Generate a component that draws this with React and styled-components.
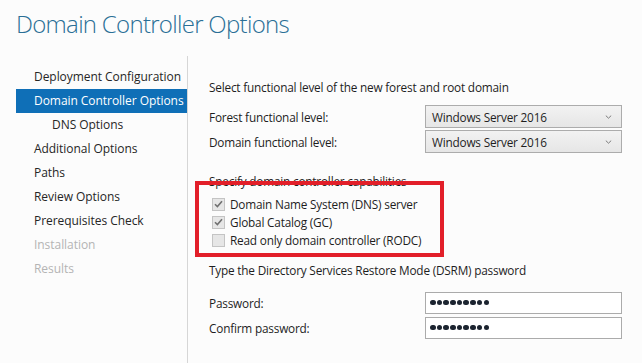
import React from "react";
import styled, { createGlobalStyle } from "styled-components";

const Global = createGlobalStyle`
  html, body {
    margin: 0;
    padding: 0;
    background: #fcfcfc;
  }
  body {
    font-family: "Open Sans", "Noto Sans", sans-serif;
    color: #1e1e1e;
  }
`;

const Page = styled.div`
  position: relative;
  width: 642px;
  height: 363px;
  overflow: hidden;
  background: #fcfcfc;
`;

const Title = styled.h1`
  margin: 0;
  padding: 7px 0 0 16px;
  height: 56px;
  box-sizing: border-box;
  font-size: 24px;
  font-weight: 300;
  color: #2a6f96;
  letter-spacing: -0.7px;
`;

const Body = styled.div`
  display: grid;
  grid-template-columns: 188px 1fr;
  height: 307px;
`;

const Nav = styled.ul`
  list-style: none;
  margin: 0;
  padding: 9px 0 0 16px;
  border-right: 1px solid #d6d6d6;
`;

const NavItem = styled.li`
  height: 24px;
  line-height: 24px;
  width: 171px;
  box-sizing: border-box;
  padding-left: ${(p) => (p.$sub ? 36 : 18)}px;
  font-size: 12px;
  letter-spacing: -0.05px;
  white-space: nowrap;
  background: ${(p) => (p.$active ? "#0f6fb7" : "transparent")};
  color: ${(p) => (p.$active ? "#ffffff" : p.$disabled ? "#b4b4b4" : "#262626")};
`;

const Content = styled.div`
  padding: 21px 0 0 21px;
  font-size: 11.8px;
  letter-spacing: -0.2px;
`;

const Heading = styled.div`
  height: 20px;
  line-height: 20px;
  margin-top: ${(p) => p.$top || 0}px;
  margin-bottom: ${(p) => p.$gap || 0}px;
  white-space: nowrap;
`;

const Row = styled.div`
  display: grid;
  grid-template-columns: 216px 197px;
  align-items: center;
  height: 25px;
`;

const Select = styled.div`
  display: flex;
  align-items: center;
  justify-content: space-between;
  height: 23px;
  box-sizing: border-box;
  padding: 0 9px 0 6px;
  border: 1px solid #acacac;
  background: linear-gradient(#f2f2f2, #e6e6e6);
  color: #1e1e1e;
`;

const Chevron = styled.svg`
  width: 7px;
  height: 4px;
`;

const Input = styled.div`
  display: flex;
  align-items: center;
  height: 22px;
  box-sizing: border-box;
  padding-left: 4px;
  border: 1px solid #ababab;
  background: #ffffff;
  gap: 1.2px;
`;

const Dot = styled.span`
  width: 5.5px;
  height: 5.5px;
  border-radius: 50%;
  background: #1c2430;
`;

const Checks = styled.div`
  display: flex;
  flex-direction: column;
  padding: 4px 0 11px 3px;
`;

const CheckRow = styled.div`
  display: flex;
  align-items: center;
  gap: 5px;
  height: 18px;
`;

const Box = styled.span`
  display: flex;
  align-items: center;
  justify-content: center;
  width: 13px;
  height: 13px;
  box-sizing: border-box;
  border: 1px solid #c4c4c4;
  background: #e6e6e6;
`;

const Highlight = styled.div`
  position: absolute;
  left: 195px;
  top: 181px;
  width: 249px;
  height: 76px;
  box-sizing: border-box;
  border: 4px solid #e21f29;
`;

const steps = [
  { label: "Deployment Configuration" },
  { label: "Domain Controller Options", active: true },
  { label: "DNS Options", sub: true },
  { label: "Additional Options" },
  { label: "Paths" },
  { label: "Review Options" },
  { label: "Prerequisites Check" },
  { label: "Installation", disabled: true },
  { label: "Results", disabled: true },
];

const Dropdown = ({ value }) => (
  <Select>
    {value}
    <Chevron viewBox="0 0 7 4">
      <path d="M0.8 0.6 L3.5 3.2 L6.2 0.6" fill="none" stroke="#7a7a7a" strokeWidth="1" />
    </Chevron>
  </Select>
);

const Password = () => (
  <Input>
    {Array.from({ length: 9 }).map((_, i) => (
      <Dot key={i} />
    ))}
  </Input>
);

const Check = ({ checked, label }) => (
  <CheckRow>
    <Box>
      {checked && (
        <svg width="9" height="8" viewBox="0 0 9 8">
          <path d="M1 4.2 L3.4 6.6 L8 1.2" fill="none" stroke="#707070" strokeWidth="1.6" />
        </svg>
      )}
    </Box>
    {label}
  </CheckRow>
);

const App = () => {
  return (
    <Page>
      <Global />
      <Title>Domain Controller Options</Title>
      <Body>
        <Nav>
          {steps.map((s) => (
            <NavItem key={s.label} $active={s.active} $sub={s.sub} $disabled={s.disabled}>
              {s.label}
            </NavItem>
          ))}
        </Nav>
        <Content>
          <Heading $gap={7}>Select functional level of the new forest and root domain</Heading>
          <Row>
            Forest functional level:
            <Dropdown value="Windows Server 2016" />
          </Row>
          <Row>
            Domain functional level:
            <Dropdown value="Windows Server 2016" />
          </Row>
          <Heading $top={17}>Specify domain controller capabilities</Heading>
          <Checks>
            <Check checked label="Domain Name System (DNS) server" />
            <Check checked label="Global Catalog (GC)" />
            <Check label="Read only domain controller (RODC)" />
          </Checks>
          <Heading $gap={10}>Type the Directory Services Restore Mode (DSRM) password</Heading>
          <Row>
            Password:
            <Password />
          </Row>
          <Row>
            Confirm password:
            <Password />
          </Row>
        </Content>
      </Body>
      <Highlight />
    </Page>
  );
};

export default App;
